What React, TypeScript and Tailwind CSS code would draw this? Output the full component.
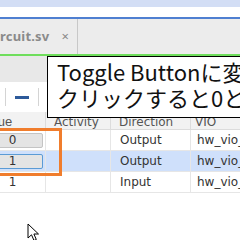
import React from 'react';

interface Row {
  value: string;
  direction: string;
  vio: string;
  selected?: boolean;
  button?: boolean;
}

const rows: Row[] = [
  { value: '0', direction: 'Output', vio: 'hw_vio_1', button: true },
  { value: '1', direction: 'Output', vio: 'hw_vio_1', button: true, selected: true },
  { value: '1', direction: 'Input', vio: 'hw_vio_1' },
];

function Cursor() {
  return (
    <svg className="absolute left-[27px] top-[223px]" width="14" height="20" viewBox="0 0 14 20">
      <path d="M1 1 L1 15 L4.5 11.8 L7 17.5 L9.3 16.5 L6.9 11 L11.5 11 Z" fill="#fff" stroke="#000" strokeWidth="1" strokeLinejoin="round" />
    </svg>
  );
}

export default function App() {
  return (
    <div className="relative w-[240px] h-[240px] overflow-hidden bg-white font-['Noto_Sans','Noto_Sans_CJK_JP',sans-serif]">
      <div className="h-[7px] bg-[#d3def5]" />
      <div className="h-[10px] bg-white" />
      <div className="h-[2px] bg-[#4f7fd1]" />
      <div className="h-[35px] bg-[#ececec] flex items-center">
        <div className="flex items-center h-full w-[78px] border-r border-[#c8c8c8]">
          <span className="-ml-[11px] text-[13px] font-bold text-[#8a8a8a] tracking-[0.2px]">circuit.sv</span>
          <span className="ml-auto mr-[8px] text-[13px] text-[#888]">×</span>
        </div>
      </div>
      <div className="h-[2px] bg-[#6fde5c]" />
      <div className="h-[26px] bg-[#e8e8e8]" />
      <div className="h-[30px] flex items-center">
        <div className="w-px h-[18px] bg-[#d4d4d4] ml-[5px]" />
        <div className="w-[14px] h-[3px] bg-[#2d5a9a] ml-[9px]" />
        <div className="w-px h-[18px] bg-[#d4d4d4] ml-[9px]" />
      </div>
      <div className="-ml-[21px] text-[12px] text-[#333] font-['DejaVu_Sans','Noto_Sans',sans-serif]">
        <div className="grid grid-cols-[66px_65px_80px_1fr] h-[18px] bg-[#f2f2f2] text-[#555] border-b border-[#dcdcdc] items-center">
          <div className="pl-[1px] font-['Liberation_Sans',sans-serif] text-[13px]">Value</div>
          <div className="pl-[8px] h-full flex items-center border-l border-[#dcdcdc]">Activity</div>
          <div className="pl-[8px] h-full flex items-center border-l border-[#dcdcdc]">Direction</div>
          <div className="pl-[4px] h-full flex items-center border-l border-[#dcdcdc]">VIO</div>
        </div>
        {rows.map((r, i) => (
          <div
            key={i}
            className={`grid grid-cols-[66px_65px_80px_1fr] h-[21px] border-b border-[#e6e6e6] ${r.selected ? 'bg-[#cfe0fb]' : 'bg-white'}`}
          >
            <div className="flex items-center justify-center pl-[1px]">
              {r.button ? (
                <div
                  className={`w-[60px] h-[15px] flex items-center justify-center bg-[#e4e4e4] border rounded-[2px] ${r.selected ? 'border-[#5b9bd5]' : 'border-[#c4c4c4]'}`}
                >
                  {r.value}
                </div>
              ) : (
                <span>{r.value}</span>
              )}
            </div>
            <div className="border-l border-[#e6e6e6]" />
            <div className="pl-[9px] flex items-center border-l border-[#e6e6e6]">{r.direction}</div>
            <div className="pl-[6px] flex items-center border-l border-[#e6e6e6] whitespace-nowrap">{r.vio}</div>
          </div>
        ))}
      </div>
      <div className="absolute left-[-4px] top-[128px] w-[66px] h-[48px] border-[3px] border-[#f07d2d]" />
      <div className="absolute left-[47px] top-[56px] w-[240px] h-[62px] bg-white border-[1.5px] border-black pl-[9px] pt-[1px] text-[22px] leading-[26px] text-[#111] whitespace-nowrap font-['Noto_Sans_CJK_JP',sans-serif]">
        <div>Toggle Buttonに変更</div>
        <div>クリックすると0と1</div>
      </div>
      <Cursor />
    </div>
  );
}
